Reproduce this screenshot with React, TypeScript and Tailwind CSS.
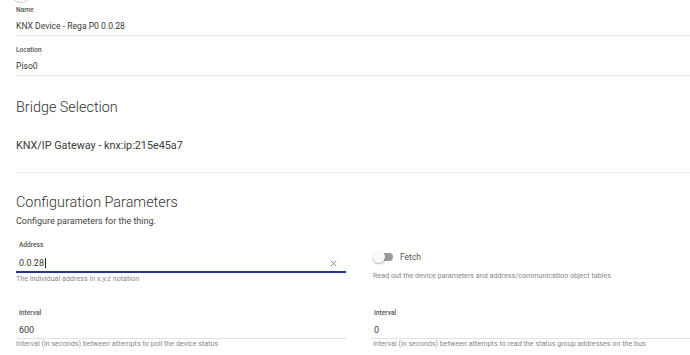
import React from "react";

function Label({ children, className = "" }: { children: React.ReactNode; className?: string }) {
  return <div className={`text-[6.6px] leading-[8px] font-medium text-[#555] ${className}`}>{children}</div>;
}

export default function App() {
  return (
    <div
      className="relative w-[690px] h-[355px] overflow-hidden bg-white text-[#333]"
      style={{ fontFamily: "Roboto, 'Noto Sans', sans-serif" }}
    >
      <div className="absolute left-[9px] top-[-22px] w-[24px] h-[25px] rounded-full border border-[#cfcfcf]" />
      <div className="pl-4">
        {/* Name */}
        <div className="pt-[6px] pb-[3px] border-b border-[#e2e2e2]">
          <Label>Name</Label>
          <div className="mt-[6px] text-[8.6px] leading-[12px] text-[#3a3a3a]">KNX Device - Rega P0 0.0.28</div>
        </div>
        {/* Location */}
        <div className="pt-[10px] pb-[3px] border-b border-[#e2e2e2]">
          <Label>Location</Label>
          <div className="mt-[6px] text-[8.6px] leading-[12px] text-[#3a3a3a]">Piso0</div>
        </div>

        <div className="mt-[22px] text-[14.4px] leading-[20px] font-light text-[#333]">Bridge Selection</div>
        <div className="mt-[21px] text-[10.8px] leading-[14px] text-[#3a3a3a]">KNX/IP Gateway - knx:ip:215e45a7</div>
        <div className="mt-[19px] border-b border-[#f2f2f2]" />

        <div className="mt-[20px] text-[14.4px] leading-[20px] font-light text-[#333]">Configuration Parameters</div>
        <div className="mt-[2px] text-[9px] leading-[12px] text-[#444]">Configure parameters for the thing.</div>

        <div className="grid grid-cols-[330px_1fr] gap-x-[25px]">
          {/* Address */}
          <div className="pt-[14px]">
            <div className="px-[3px]">
              <Label>Address</Label>
            </div>
            <div className="mt-[8px] pb-[2px] border-b-2 border-[#24349c] px-[3px] flex items-center">
              <div className="flex-1 text-[9px] leading-[12px] text-[#3a3a3a] flex items-center">
                0.0.28<span className="inline-block w-px h-[10px] bg-[#222] ml-px" />
              </div>
              <svg width="7" height="7" viewBox="0 0 10 10" className="mr-[6px]">
                <path d="M1 1 L9 9 M9 1 L1 9" stroke="#777" strokeWidth="1.2" fill="none" />
              </svg>
            </div>
            <div className="mt-[2px] text-[7.2px] leading-[8px] text-[#888]">The individual address in x.y.z notation</div>
          </div>
          {/* Fetch */}
          <div className="pt-[24px] pl-[2px]">
            <div className="flex items-center h-[12px]">
              <div className="relative w-[20px] h-[12px] flex items-center">
                <div className="ml-[3px] w-[17px] h-[8px] rounded-full bg-[#9a9a9a]" />
                <div className="absolute left-0 top-0 w-[12px] h-[12px] rounded-full bg-[#fafafa] shadow-[0_1px_2px_rgba(0,0,0,0.35)]" />
              </div>
              <div className="ml-[7px] text-[8.5px] leading-[12px] text-[#555]">Fetch</div>
            </div>
            <div className="mt-[9px] text-[7.2px] leading-[8px] text-[#888]">
              Read out the device parameters and address/communication object tables
            </div>
          </div>

          {/* Interval left */}
          <div className="pt-[26px]">
            <div className="px-[3px]">
              <Label>Interval</Label>
            </div>
            <div className="mt-[7px] pb-[2px] border-b border-[#e2e2e2] px-[3px] text-[9px] leading-[12px] text-[#3a3a3a]">600</div>
            <div className="mt-px text-[7.2px] leading-[8px] text-[#888]">Interval (in seconds) between attempts to poll the device status</div>
          </div>
          {/* Interval right */}
          <div className="pt-[26px]">
            <div className="px-[3px]">
              <Label>Interval</Label>
            </div>
            <div className="mt-[7px] pb-[2px] border-b border-[#e2e2e2] px-[3px] text-[9px] leading-[12px] text-[#3a3a3a]">0</div>
            <div className="mt-px pl-[2px] text-[7.2px] leading-[8px] text-[#888]">
              Interval (in seconds) between attempts to read the status group addresses on the bus
            </div>
          </div>
        </div>
      </div>
    </div>
  );
}
